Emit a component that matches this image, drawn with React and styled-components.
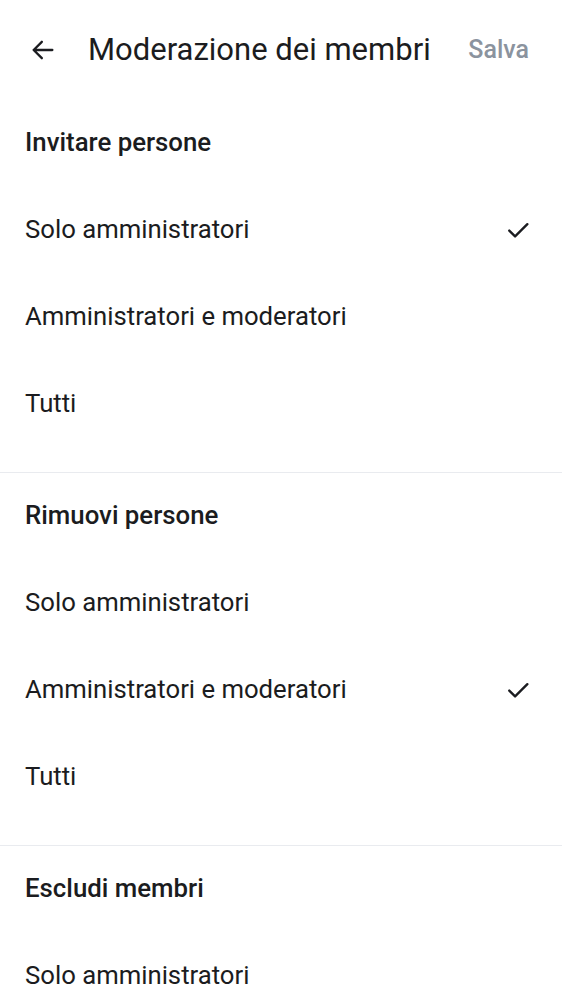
import React from 'react';
import styled, { createGlobalStyle } from 'styled-components';

const GlobalStyle = createGlobalStyle`
  html, body {
    margin: 0;
    padding: 0;
    background: #ffffff;
  }
  body {
    font-family: Roboto, "Noto Sans", sans-serif;
    color: #1b1c20;
  }
`;

const Page = styled.div`
  width: 562px;
  height: 1000px;
  overflow: hidden;
  background: #ffffff;
`;

const Header = styled.header`
  display: flex;
  align-items: center;
  height: 100px;
  padding: 0 33px 1px 28px;
  box-sizing: border-box;
`;

const BackButton = styled.button`
  display: flex;
  align-items: center;
  justify-content: center;
  width: 30px;
  height: 30px;
  padding: 0;
  border: none;
  background: none;
  color: #1b1c20;
  margin-right: 30px;
`;

const Title = styled.h1`
  flex: 1;
  margin: 0;
  font-size: 31px;
  font-weight: 400;
  white-space: nowrap;
`;

const Save = styled.span`
  font-size: 25px;
  font-weight: 500;
  color: #8b939e;
`;

const Section = styled.section`
  padding-bottom: 25px;
  border-bottom: ${props => (props.last ? 'none' : '1px solid #e9ebef')};
`;

const SectionTitle = styled.h2`
  display: flex;
  align-items: center;
  height: 86px;
  margin: 0;
  padding: 0 25px 2px;
  box-sizing: border-box;
  font-size: 25.8px;
  font-weight: 500;
`;

const Option = styled.div`
  display: flex;
  align-items: center;
  justify-content: space-between;
  height: 87px;
  padding: 0 30px 2px 25px;
  box-sizing: border-box;
  font-size: 25.7px;
  font-weight: 400;
`;

const CheckIcon = styled.svg`
  margin-top: 2px;
`;

const Check = () => (
  <CheckIcon width="28" height="28" viewBox="0 0 24 24" fill="none" stroke="#1b1c20" strokeWidth="2" strokeLinecap="round" strokeLinejoin="round">
    <path d="M4.5 12.5l5 5L20 7" />
  </CheckIcon>
);

const Arrow = () => (
  <svg width="28" height="28" viewBox="0 0 24 24" fill="none" stroke="currentColor" strokeWidth="2" strokeLinecap="round" strokeLinejoin="round">
    <path d="M20 12H4M11 5l-7 7 7 7" />
  </svg>
);

const sections = [
  { title: 'Invitare persone', selected: 0 },
  { title: 'Rimuovi persone', selected: 1 },
  { title: 'Escludi membri', selected: -1 },
];

const options = ['Solo amministratori', 'Amministratori e moderatori', 'Tutti'];

export default function App() {
  return (
    <Page>
      <GlobalStyle />
      <Header>
        <BackButton aria-label="Indietro">
          <Arrow />
        </BackButton>
        <Title>Moderazione dei membri</Title>
        <Save>Salva</Save>
      </Header>
      {sections.map((s, i) => (
        <Section key={s.title} last={i === sections.length - 1}>
          <SectionTitle>{s.title}</SectionTitle>
          {options.map((o, j) => (
            <Option key={o}>
              <span>{o}</span>
              {s.selected === j && <Check />}
            </Option>
          ))}
        </Section>
      ))}
    </Page>
  );
}
